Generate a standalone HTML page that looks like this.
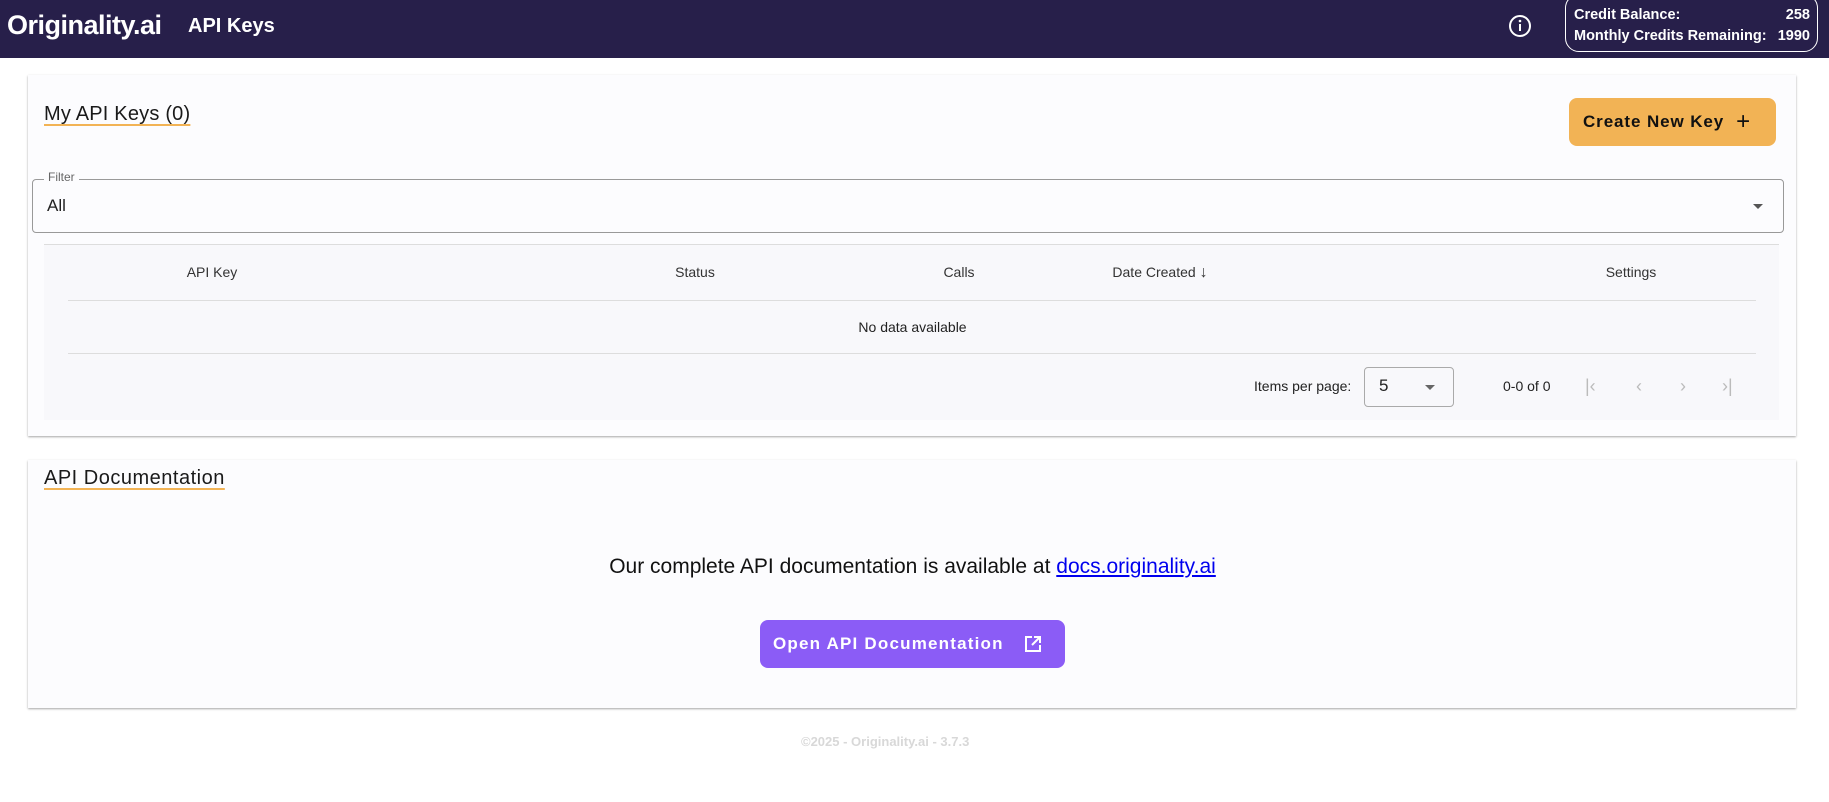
<!DOCTYPE html>
<html><head><meta charset="utf-8"><style>
*{box-sizing:border-box;margin:0;padding:0}
body{width:1829px;height:802px;background:#fff;font-family:"Liberation Sans",sans-serif;position:relative;overflow:hidden;color:#222}
.hdr{position:absolute;left:0;top:0;width:1829px;height:58px;background:#271f4a;color:#fff}
.abs{position:absolute}
.card{position:absolute;left:28px;width:1768px;background:#fcfcfe;box-shadow:0 1px 2px rgba(0,0,0,.35)}
.title{position:absolute;left:16px;font-size:20px;color:#1a1a1a;text-decoration:underline;text-decoration-color:#f2b355;text-underline-offset:4px;text-decoration-thickness:2px}
.th{position:absolute;top:264px;font-size:14px;color:#333;transform:translateX(-50%)}
.pg{position:absolute;top:376px;font-size:18px;color:#bbb}
</style></head><body>
<div class="hdr">
 <div class="abs" style="left:7px;top:10px;font-size:27px;font-weight:bold;letter-spacing:-0.5px">Originality.ai</div>
 <div class="abs" style="left:188px;top:15px;font-size:20px;font-weight:bold">API Keys</div>
 <svg class="abs" style="left:1508px;top:14px" width="24" height="24" viewBox="0 0 24 24"><circle cx="12" cy="12" r="10" fill="none" stroke="#fff" stroke-width="2"/><rect x="11" y="10" width="2" height="7" fill="#fff"/><circle cx="12" cy="7" r="1.3" fill="#fff"/></svg>
 <div class="abs" style="left:1565px;top:-6px;width:253px;height:58px;border:1px solid #fff;border-radius:14px"></div>
 <div class="abs" style="left:1574px;top:5px;width:236px;font-size:14.5px;font-weight:bold;line-height:21px">
  <div style="display:flex;justify-content:space-between"><span>Credit Balance:</span><span>258</span></div>
  <div style="display:flex;justify-content:space-between"><span>Monthly Credits Remaining:</span><span>1990</span></div>
 </div>
</div>

<div class="card" style="top:75px;height:361px"></div>
<div class="title" style="top:103px;left:44px;letter-spacing:0.2px">My API Keys (0)</div>
<div class="abs" style="left:1569px;top:98px;width:207px;height:48px;background:#f2b355;border-radius:8px;font-weight:900;font-size:17px;letter-spacing:0.9px;color:#111;display:flex;align-items:center;padding-left:14px">Create New Key <span style="font-weight:normal;font-size:24px;margin-left:12px">+</span></div>

<div class="abs" style="left:32px;top:179px;width:1752px;height:54px;border:1px solid #999;border-radius:4px"></div>
<div class="abs" style="left:44px;top:170px;font-size:12px;color:#666;background:#fcfcfe;padding:0 4px">Filter</div>
<div class="abs" style="left:47px;top:196px;font-size:17px;color:#222">All</div>
<div class="abs" style="left:1753px;top:204px;border:5px solid transparent;border-top-color:#555;border-bottom:0"></div>

<div class="abs" style="left:44px;top:244px;width:1735px;height:176px;background:#f8f8fb;border-top:1px solid #ddd"></div>
<div class="th" style="left:212px">API Key</div>
<div class="th" style="left:695px">Status</div>
<div class="th" style="left:959px">Calls</div>
<div class="th" style="left:1160px">Date Created <span style="font-size:16px">↓</span></div>
<div class="th" style="left:1631px">Settings</div>
<div class="abs" style="left:68px;top:300px;width:1688px;height:1px;background:#ddd"></div>
<div class="abs" style="left:0;width:1829px;text-align:center;top:319px;font-size:14px;color:#222;padding-right:4px">No data available</div>
<div class="abs" style="left:68px;top:353px;width:1688px;height:1px;background:#ddd"></div>
<div class="abs" style="left:1254px;top:378px;font-size:14px">Items per page:</div>
<div class="abs" style="left:1364px;top:367px;width:90px;height:40px;border:1px solid #aaa;border-radius:4px"></div>
<div class="abs" style="left:1379px;top:376px;font-size:17px">5</div>
<div class="abs" style="left:1425px;top:385px;border:5px solid transparent;border-top-color:#666;border-bottom:0"></div>
<div class="abs" style="left:1503px;top:378px;font-size:14px">0-0 of 0</div>
<div class="pg" style="left:1585px">|&lsaquo;</div>
<div class="pg" style="left:1636px">&lsaquo;</div>
<div class="pg" style="left:1680px">&rsaquo;</div>
<div class="pg" style="left:1722px">&rsaquo;|</div>

<div class="card" style="top:460px;height:248px"></div>
<div class="title" style="top:467px;left:44px;letter-spacing:0.5px">API Documentation</div>
<div class="abs" style="left:0;width:1829px;text-align:center;top:555px;font-size:21px;color:#111;padding-right:4px">Our complete API documentation is available at <span style="color:#0000ee;text-decoration:underline">docs.originality.ai</span></div>
<div class="abs" style="left:760px;top:620px;width:305px;height:48px;background:#8b5cf6;border-radius:8px;color:#fff;font-weight:900;font-size:17px;letter-spacing:1.2px;display:flex;align-items:center;padding-left:13px">Open API Documentation
 <svg style="margin-left:20px" width="18" height="18" viewBox="0 0 18 18" fill="none" stroke="#fff" stroke-width="2"><path d="M8 2H2v14h14v-6M10 2h6v6M16 2L8 10"/></svg></div>
<div class="abs" style="left:801px;top:734px;font-size:13px;color:#d8d8d8;font-weight:bold">©2025 - Originality.ai - 3.7.3</div>
</body></html>
